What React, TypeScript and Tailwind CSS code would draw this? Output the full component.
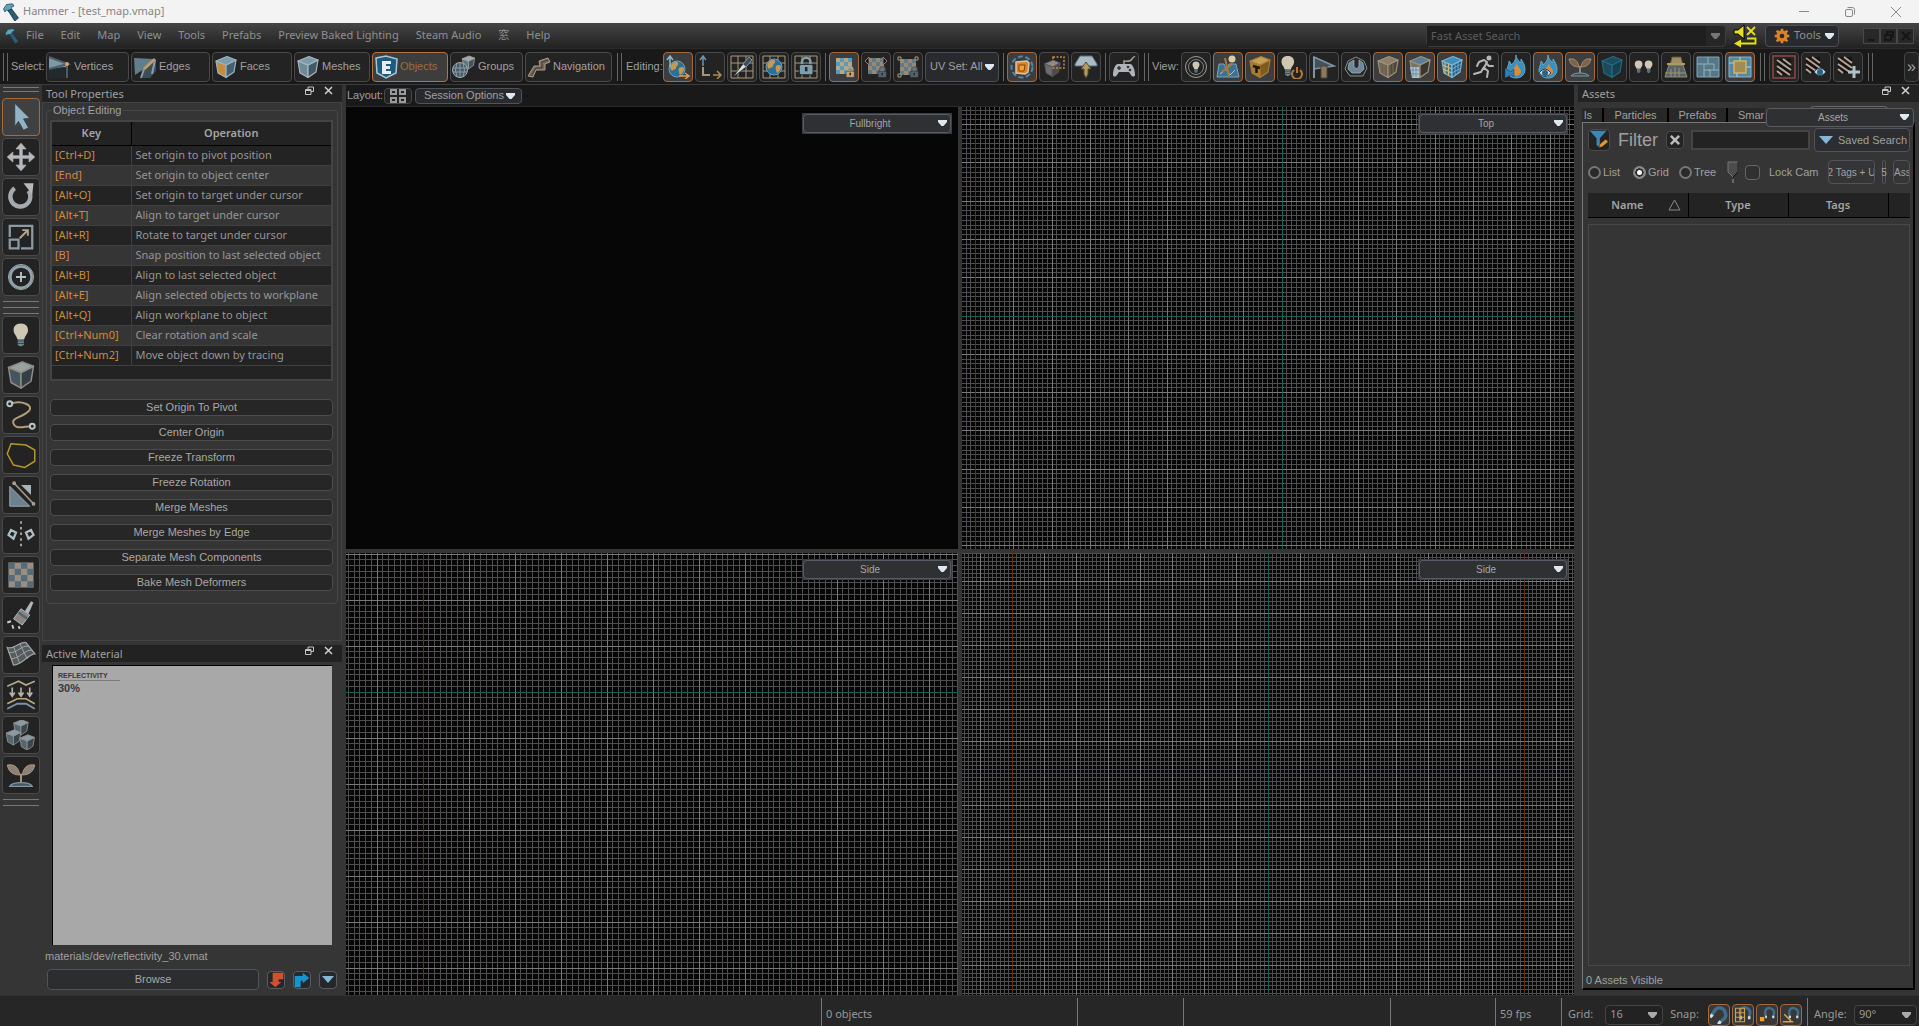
import clsx from 'clsx'
import { type ReactNode } from 'react'

const UI = "font-['Noto_Sans','Noto_Sans_CJK_JP',sans-serif] text-[11px]"
const GOTHIC = "font-['Liberation_Sans','Noto_Sans_CJK_JP',sans-serif]"

function Svg({ size = 24, children, className }: { size?: number, children: ReactNode, className?: string }) {
  return (
    <svg width={size} height={size} viewBox="0 0 24 24" fill="none" className={clsx('shrink-0', className)} aria-hidden="true">
      {children}
    </svg>
  )
}

type CubeProps = { x?: number, y?: number, s?: number, front?: string, side?: string, top?: string, edge?: string }

function Cube({ x = 0, y = 0, s = 1, front = '#5d7482', side = '#3f5562', top = '#8fb0c0', edge = '#b9a58a' }: CubeProps) {
  return (
    <g transform={`translate(${x} ${y}) scale(${s})`} stroke={edge} strokeWidth="1.2" strokeLinejoin="round">
      <path d="M2 6 12 10V22.500L4 18z" fill={front} />
      <path d="M12 10 22 5 20 17 12 22.500z" fill={side} />
      <path d="M2 6 13 1.500 22 5 12 10z" fill={top} />
    </g>
  )
}

function Globe() {
  return (
    <>
      <circle cx="11" cy="14" r="8" fill="#2b7099" stroke="#6aa3c2" />
      <path d="M5 10c3-4 6-4 7-2s-2 3-2 5-3 1-4 3c-2-2-2-4-1-6zM13 13c3-2 5-1 5 1s-2 5-4 6c-1-2-2-5-1-7z" fill="#c99850" />
    </>
  )
}

function Lock({ x = 0, y = 0, s = 1, color = '#7f9fad' }: { x?: number, y?: number, s?: number, color?: string }) {
  return (
    <g transform={`translate(${x} ${y}) scale(${s})`}>
      <path d="M7 11V7a5 5 0 0 1 10 0v4" stroke={color} strokeWidth="3" />
      <rect x="4" y="10" width="16" height="12" rx="2" fill={color} stroke="#222" />
      <path d="M12 13v5" stroke="#1c2a30" strokeWidth="3" />
    </g>
  )
}

function GridLines() {
  return <path d="M1 1h22v22H1zM8 1v22M16 1v22M1 8h22M1 16h22" stroke="#a99a80" />
}

function Checker({ a, b, x = 4, y = 3 }: { a: string, b: string, x?: number, y?: number }) {
  return (
    <g transform={`translate(${x} ${y})`}>
      <rect width="16" height="16" fill={a} />
      <path d="M0 0h4v4H0zM8 0h4v4H8zM4 4h4v4H4zM12 4h4v4h-4zM0 8h4v4H0zM8 8h4v4H8zM4 12h4v4H4zM12 12h4v4h-4z" fill={b} />
    </g>
  )
}

function Flame() {
  return (
    <>
      <path d="M12 0c0 4 3 5 4 8 1-1 1-2 1-4 2 3 4 6 4 10 0 6-4 9-9 9s-9-3-9-8c0-3 2-5 2-9 1 1 2 2 2 4 3-2 5-5 5-10z" fill="#3a8fbb" stroke="#74b4d4" strokeWidth=".8" />
      <path d="M13 8c0 4 4 5 4 9-1 5-9 5-9 0 0-3 4-5 5-9z" fill="#dd8a38" />
    </>
  )
}

function Eye({ x = 0, y = 0 }: { x?: number, y?: number }) {
  return (
    <g transform={`translate(${x} ${y})`}>
      <path d="M1 7q6-8 12 0-6 7-12 0z" fill="#cfd8dd" stroke="#24445a" />
      <circle cx="7" cy="7" r="3" fill="#2b6184" />
    </g>
  )
}

function Plant({ leaf, base }: { leaf: string, base: string }) {
  return (
    <>
      <path d="M1 4c6-1 9 2 10 8C5 12 2 9 1 4zM23 4c-6-1-9 2-10 8 6 0 9-3 10-8z" fill={leaf} stroke="#b59d80" strokeWidth=".7" />
      <path d="M12 11v7" stroke="#b39c80" strokeWidth="1.500" />
      <path d="M3 21c2-4 16-4 18 0z" fill={base} stroke="#7e97a4" />
    </>
  )
}

function Bulb({ x = 0, y = 0, s = 1 }: { x?: number, y?: number, s?: number }) {
  return (
    <g transform={`translate(${x} ${y}) scale(${s})`}>
      <path d="M12 1c5 0 7 3 7 6.500 0 4-3 5-3.500 8.500h-7C8 12.500 5 11.500 5 7.500 5 4 7 1 12 1z" fill="#d0c6b4" />
      <path d="M9 16h6v6l-3 1.500L9 22z" fill="#6f8796" />
      <path d="M9 18h6M9 20.500h6" stroke="#39474f" />
    </g>
  )
}

function Stripes({ frame }: { frame?: boolean }) {
  return (
    <>
      <rect x="5" y="4" width="14" height="16" fill="#181414" />
      <path d="M5 5l14 10M5 11l13 9M5 16l5 4M11 4l8 6" stroke="#b5a598" strokeWidth="2" />
      {frame && <path d="M1 1h22v22H1z" stroke="#8d4747" strokeWidth="1.500" />}
    </>
  )
}

function Magnet() {
  return (
    <>
      <path d="M5 20 4 13C2 5 9 1 14 3s8 5 6 11l-1 6" stroke="#3f6e8c" strokeWidth="4.500" />
      <path d="M3 17h4v5H3zM17 17h4v5h-4z" fill="#d6dde0" />
    </>
  )
}

const ICONS: Record<string, ReactNode> = {
  hammer: <>
    <path d="M2 8 6 2l8-1 2 3-4 2 1 4-5 1-2-2-2 3z" fill="#5fa3bf" stroke="#1e4253" />
    <path d="M8 10l5-2 9 12-5 4z" fill="#2c5f77" stroke="#17303c" />
  </>,
  vertices: <>
    <path d="M1 2 20 9v3L1 14z" fill="#7d98a6" />
    <path d="M1 14 17 12v11H1z" fill="#222a2f" />
    <path d="M1 2 20 9 1 14M19 10v13" stroke="#4b5e69" strokeWidth="2" />
    <circle cx="19" cy="9" r="2" fill="#e8a06a" />
  </>,
  edges: <>
    <path d="M1 3 21 4 11 14 2 20z" fill="#627d8c" />
    <path d="M23 5v11l-6 7H9l2-9z" fill="#3b4d58" />
    <path d="M22 4 11 14" stroke="#c59c65" strokeWidth="3" />
    <path d="M11 14 8 23M22 5l-3 14" stroke="#879da9" strokeWidth="2" />
  </>,
  faces: <Cube front="#c58c3c" side="#45606f" top="#7c9cad" edge="#9bb6c3" />,
  meshes: <Cube front="#6f8b9a" side="#415a69" top="#7c9cad" edge="#a9b8bd" />,
  objects: <>
    <path d="M2 3 12 1l11 3-1 14-10 5L3 18z" fill="#1f5a80" stroke="#a8c7d6" strokeWidth="1.500" />
    <path d="M8 6h9v3h-5v2h4v3h-4v2h5v3H8z" fill="#e6edf0" />
  </>,
  groups: <>
    <Cube x={9} y={0} s={0.62} />
    <circle cx="8" cy="15" r="7.500" fill="#435a67" stroke="#9aabb3" />
    <path d="M1 13h14M1 17h14M8 7v16M5 8q-3 7 0 14M11 8q3 7 0 14" stroke="#9aabb3" strokeWidth=".8" />
  </>,
  navigation: <>
    <path d="M1 21 7 11h6l-1-5 9-3 2 4-5 2v6H9l-3 7z" fill="#75695b" stroke="#a89a86" />
    <path d="M4 21l5-8h6V7l6-2" stroke="#433b33" />
  </>,
  worldAxis: <>
    <Globe />
    <path d="M4 12V2M1 5l3-4 3 4" stroke="#8cb8d0" strokeWidth="1.500" />
    <path d="M13 21h9M19 18l4 3-4 3" stroke="#e39a4c" strokeWidth="1.500" />
  </>,
  localAxis: <>
    <path d="M5 11V2M2 5l3-4 3 4" stroke="#6e95ac" strokeWidth="1.500" />
    <path d="M5 12v8h7" stroke="#a59578" strokeWidth="2" />
    <path d="M15 20h7M19 16l4 4-4 4" stroke="#b08a55" strokeWidth="1.500" />
  </>,
  gridKnife: <>
    <GridLines />
    <path d="M3 22 13 9l3 3z" fill="#d8dee2" stroke="#222" strokeWidth=".6" />
    <path d="M13 9l6-7 3 3-6 7z" fill="#3b4d5a" stroke="#8499a5" />
  </>,
  gridGlobe: <><GridLines /><g transform="translate(1 -2)"><Globe /></g></>,
  gridLock: <><GridLines /><Lock x={2} y={1} s={0.85} /></>,
  uvLock: <><Checker a="#4d9fc7" b="#c1a47e" /><Lock x={12} y={11} s={0.52} color="#c1a279" /></>,
  uvScale: <>
    <Checker a="#5f7b89" b="#9a8874" />
    <path d="M1 6l4-4v8zM23 6l-4-4v8z" fill="#111" stroke="#8f8370" />
    <Lock x={12} y={11} s={0.52} color="#58636a" />
  </>,
  uvCorners: <>
    <Checker a="#5f7b89" b="#9a8874" x={4} y={4} />
    <path d="M2 2h3v3H2zM19 2h3v3h-3zM2 19h3v3H2z" fill="#222" stroke="#b39b78" />
    <Lock x={12} y={11} s={0.52} color="#58636a" />
  </>,
  selectCube: <>
    <circle cx="12" cy="12" r="10.500" stroke="#4f88ab" strokeWidth="2" strokeDasharray="5 2.500" />
    <path d="M6 7l11-1 2 2-1 9-3 2-9-1z" fill="#dd8420" stroke="#d5c5b0" strokeWidth="1.500" />
    <path d="M9 10h6l-1 6H9z" fill="#f4a041" stroke="#7a4310" />
  </>,
  boxCube: <>
    <Cube x={1} y={4} s={0.78} front="#6d6a70" side="#4d4a50" top="#8d8990" edge="#55525a" />
    <path d="M11 2h11v11H11z" stroke="#c78a3c" strokeDasharray="2 1.500" strokeWidth="1.500" />
  </>,
  lamp: <>
    <path d="M6 1h12l5 8v2H1V9z" fill="#a9bcc6" stroke="#596b75" />
    <path d="M12 7l5 7h-3v5l-2 4-2-4v-5H7z" fill="#b39a63" stroke="#5d4b2b" />
  </>,
  gamepad: <>
    <path d="M6 9h12c3 0 5 6 5 11 0 2-3 2-4 0l-2-3H7l-2 3c-1 2-4 2-4 0C1 15 3 9 6 9z" fill="#b0b5b9" />
    <path d="M12 9V6q6 1 8-2t3-2" stroke="#a59c8a" strokeWidth="1.500" />
    <path d="M5 13h4M7 11v4" stroke="#333" strokeWidth="1.500" />
    <circle cx="16" cy="12" r="1.300" fill="#333" /><circle cx="18" cy="15" r="1.300" fill="#333" />
  </>,
  bulbRing: <>
    <circle cx="12" cy="12" r="10.500" stroke="#a59d8d" /><circle cx="12" cy="12" r="7.500" stroke="#7d8589" />
    <Bulb x={6} y={6} s={0.5} />
  </>,
  measure: <>
    <path d="M3 9h5l2 5 3-5h7l3 13H1z" fill="#3d7190" stroke="#7fa5ba" />
    <path d="M4 19l6-5 4 6 5-5" stroke="#b9c8cf" />
    <path d="M9 3l4 18M6 17l10-8" stroke="#a97a3c" strokeWidth="2" />
    <circle cx="16" cy="4" r="3.500" fill="#dccda4" />
  </>,
  toolBox: <>
    <Cube front="#a57c32" side="#7c5a20" top="#c69e54" edge="#a87c34" />
    <path d="M5 11l7 2M8.500 12v6" stroke="#1c150a" strokeWidth="2.500" />
  </>,
  bulbPower: <>
    <Bulb x={-3} y={0} s={0.9} />
    <path d="M14 15a5 5 0 1 0 6 0M17 12v6" stroke="#b07c36" strokeWidth="2" />
  </>,
  funnelRay: <>
    <path d="M2 2 22 11 2 14z" fill="#42515b" stroke="#7e95a3" strokeWidth="1.500" />
    <path d="M2 2v21" stroke="#7e95a3" strokeWidth="2" />
    <path d="M9 11h6v12H9z" fill="#8c7a5e" stroke="#4d4232" />
  </>,
  helm: <>
    <path d="M4 6l8-4 8 4 3 7-4 8H6l-5-7z" fill="#24292c" stroke="#8c8a80" />
    <path d="M5 8l5-3v7l3 2 2-3V5l4 3 1 6-4 4H8l-4-4z" fill="#6d8796" stroke="#a7bac4" strokeWidth=".7" />
  </>,
  crate: <>
    <Cube front="#6b5f50" side="#4e453b" top="#8d7f6c" edge="#a0917a" />
    <path d="M5 8v10M8 9v11M14 10v10M17 9v9" stroke="#8e7d66" strokeWidth=".7" />
  </>,
  crateSplit: <>
    <Cube front="#7a7469" side="#393732" top="#59809a" edge="#a0917a" />
    <path d="M2 12h9v11H4z" fill="#a9c3cf" />
    <path d="M2 15h9M3 19h8M5 12v10M8 12v10" stroke="#5f7f90" strokeWidth=".7" />
  </>,
  wireCube: <>
    <Cube front="#2a76a2" side="#1e5f8c" top="#3f8fbb" edge="#84b5cf" />
    <path d="M5 7v12M8.500 8.500v12M2.500 10l9.500 4M3 14l9 4" stroke="#d5b77c" strokeWidth="1.200" />
    <path d="M15 9v12M18 7v12M12 14l9-5M12 18l9-5" stroke="#7db3d1" strokeWidth=".8" />
  </>,
  runner: <>
    <circle cx="17" cy="3" r="2.500" fill="#b6b6b6" />
    <path d="M7 7l5-2 3 2-3 6 4 3-1 6M12 12l-3 5-7 2M14 8l3 3h4M7 7l-2 4" stroke="#b6b6b6" strokeWidth="2" strokeLinecap="round" strokeLinejoin="round" />
  </>,
  flame: <><Flame /><path d="M1 13l6 4 3-3v8l-3-2-6 3z" fill="#2f80b8" stroke="#1d3848" strokeWidth=".5" /></>,
  flameEye: <><Flame /><Eye x={2} y={11} /></>,
  plant: <Plant leaf="#7d634b" base="#3c4d57" />,
  tealCube: <Cube front="#1b4c5d" side="#16404f" top="#1a4d5e" edge="#28687c" />,
  bulbs: <><Bulb x={0} y={5} s={0.55} /><Bulb x={10} y={5} s={0.55} /></>,
  skirt: <>
    <path d="M8 2h9l2 8H6z" fill="#a08d66" stroke="#5e4f33" />
    <path d="M5 10h14l4 12H1z" fill="#5a6363" stroke="#8e8c74" />
    <path d="M7 14v8M11 12v10M15 13v9M1 18h21" stroke="#9c9579" />
    <path d="M3 9h18" stroke="#b29a65" strokeWidth="2" />
  </>,
  tiles: <>
    <path d="M1 2h22v20H1z" fill="#52788a" stroke="#8aa4b0" />
    <path d="M12 2v7M1 9h17M8 9v13M12 15h11M18 9v6M8 15h6v7" stroke="#97adb7" />
  </>,
  tilesBox: <>
    <path d="M1 2h22v20H1z" fill="#5588a1" stroke="#8fb5c6" />
    <path d="M12 2v4M1 8h5M18 12h5M9 18v4" stroke="#bcd0d9" />
    <path d="M6 6h12v12H6z" fill="#a18c54" stroke="#d2b163" strokeWidth="1.500" />
  </>,
  stripes: <Stripes frame />,
  stripesEye: <><g transform="translate(-3 -2)"><Stripes /></g><Eye x={9} y={10} /></>,
  stripesPlus: <><g transform="translate(-3 -2)"><Stripes /></g><path d="M18 11v12M12 17h12" stroke="#aebfc7" strokeWidth="3" /></>,
  arrow: <path d="M7 1 19 13l-5 .500 4 7-4 2-4-7-3 4z" fill="#92b3c5" stroke="#2c3c46" strokeWidth=".6" />,
  move: <path d="M12 1l4 4.500h-3V11h5.500V8L23 12l-4.500 4v-3H13v5.500h3L12 23l-4-4.500h3V13H5.500v3L1 12l4.500-4v3H11V5.500H8z" fill="#b4babd" stroke="#b4babd" strokeWidth=".6" />,
  rotate: <>
    <path d="M7 5a8 8 0 1 0 11 2" stroke="#a3abb0" strokeWidth="3.500" />
    <path d="M14 1h8l-1 9z" fill="#b5babd" />
  </>,
  scale: <>
    <path d="M3 12V3h18v18H12" stroke="#8a9ba3" strokeWidth="1.800" />
    <path d="M3 14h7v7H3z" stroke="#8a9ba3" strokeWidth="1.800" />
    <path d="M11 13l6-6M13 6.500h4.500V11" stroke="#b5a78f" strokeWidth="1.500" />
  </>,
  pivot: <>
    <circle cx="12" cy="12" r="8.500" stroke="#8fa4ae" strokeWidth="2" />
    <circle cx="12" cy="12" r="10" stroke="#a9b3b8" strokeWidth=".8" />
    <path d="M12 8v8M8 12h8" stroke="#b5bfc4" strokeWidth="1.500" />
  </>,
  bulb: <Bulb x={2} y={2} s={0.82} />,
  block: <Cube front="#44555f" side="#333f46" top="#98a19f" edge="#8f8c83" />,
  path: <>
    <path d="M4 3c8-3 19 1 14 6S4 14 6 19s9 2 14 2" stroke="#b39d78" strokeWidth="1.600" />
    <circle cx="3" cy="3" r="2" stroke="#b6c3ca" strokeWidth="1.500" /><circle cx="21" cy="21" r="2" stroke="#b6c3ca" strokeWidth="1.500" />
  </>,
  polygon: <path d="M4 3l12 1 7 4v9l-8 5-9-2-5-9z" stroke="#b8942f" strokeWidth="1.200" />,
  clip: <>
    <path d="M3 5v16h16z" fill="#6c818c" stroke="#a4b3ba" strokeWidth=".7" /><path d="M12 4h8v8z" fill="#a5b4bb" />
    <path d="M6 2l16 17" stroke="#a59a89" strokeWidth="1.300" />
    <circle cx="6.500" cy="2.500" r="1" stroke="#b5ab9c" /><circle cx="22" cy="19" r="1" stroke="#b5ab9c" />
  </>,
  mirror: <>
    <path d="M12 1v22" stroke="#a8a8a8" strokeWidth="1.500" strokeDasharray="2 2.500" />
    <path d="M4 8l4 2-2 5-4-3zM20 8l-4 2 2 5 4-3z" stroke="#aebdc6" strokeWidth="1.800" />
  </>,
  checker: (
    <>
      <path d="M2 2h20v20H2z" fill="#9a8d82" />
      <path d="M2 2h5v5H2zM12 2h5v5h-5zM7 7h5v5H7zM17 7h5v5h-5zM2 12h5v5H2zM12 12h5v5h-5zM7 17h5v5H7zM17 17h5v5h-5z" fill="#566b79" />
    </>
  ),
  brush: <>
    <path d="M15 9l5-8 2 1-4 9z" fill="#aab7bd" />
    <path d="M12 7l7 5-6 8-7-5z" fill="#8c8580" stroke="#b7c1c6" strokeWidth=".7" />
    <path d="M10 10l7 5" stroke="#4f6675" strokeWidth="2" />
    <path d="M1 18l3-1M5 20l1 3M10 21l1 2" stroke="#c7cdd0" strokeWidth="1.500" />
  </>,
  mesh: <>
    <path d="M1 6c6 2 9-5 15-4l7 9c-5 0-10 9-17 9z" fill="#525c61" stroke="#a2a39e" />
    <path d="M2 10c7 1 10-6 16-5M4 15c7 0 10-7 17-7M6 5l5 14M11 3l6 12" stroke="#a2a39e" strokeWidth=".8" />
  </>,
  displace: <>
    <path d="M1 5l9-4 6 3 7-3" stroke="#b6a88f" strokeWidth="1.300" />
    <path d="M5 6v6M12 6v6M19 6v6M3 10l2 3 2-3M10 10l2 3 2-3M17 10l2 3 2-3" stroke="#b8b1a5" strokeWidth="1.300" />
    <path d="M1 19l8-4h7l7 4" stroke="#c2a97c" strokeWidth="1.300" /><path d="M1 23l8-4h7l7 4" stroke="#7c94a2" strokeWidth="1.500" />
  </>,
  blocks: <>
    <Cube x={5} y={-1} s={0.58} front="#536773" side="#37464f" top="#8a9ba3" edge="#93918a" />
    <Cube x={-1} y={7} s={0.58} front="#536773" side="#37464f" top="#8a9ba3" edge="#93918a" />
    <Cube x={10} y={11} s={0.58} front="#536773" side="#37464f" top="#8a9ba3" edge="#93918a" />
  </>,
  plantGrey: <Plant leaf="#8d8176" base="#47555e" />,
  gear: <>
    <path d="M12 1v22M1 12h22M4 4l16 16M20 4 4 20" stroke="#d9822b" strokeWidth="4" />
    <circle cx="12" cy="12" r="6" fill="#292a2d" stroke="#d9822b" strokeWidth="5" />
  </>,
  mute: <>
    <path d="M1 6h4l6-5v14l-6-5H1z" fill="#e6df1a" stroke="#000" />
    <path d="M14 3l8 8M22 3l-8 8" stroke="#e6df1a" strokeWidth="1.800" />
    <path d="M14 14.500h8.500v5H6" stroke="#e6df1a" strokeWidth="1.800" />
    <path d="M1 19.500l7-4v8z" fill="#e6df1a" />
  </>,
  filter: <>
    <path d="M1 1h20l-8 9v11l-4-3v-8z" fill="#3a88b3" />
    <path d="M12 21l1-4 7-6 3 3-7 6z" fill="#e79a33" stroke="#3a2a12" strokeWidth=".6" />
  </>,
  redDown: <path d="M23 1v10h-7v4h4l-9 8-9-8h5V1z" fill="#d0502f" />,
  blueRight: <path d="M1 23V6h12V1l10 8-10 8v-4h-3v10z" fill="#1893ce" />,
  magnet: <g transform="rotate(40 12 12)"><Magnet /></g>,
  magnetGrid: <><g transform="translate(5 0) scale(.8)"><Magnet /></g><path d="M2 3h12v18H2zM8 3v18M2 9h12M2 15h12" stroke="#cfa052" strokeWidth="1.500" /></>,
  magnetVertex: <><g transform="translate(7 1) scale(.7)"><Magnet /></g><path d="M2 14h7v7H2z" fill="#f0a02c" stroke="#3a2a12" /></>,
  magnetAngle: <><g transform="translate(7 1) scale(.7)"><Magnet /></g><path d="M3 11l9 9M1 21h14" stroke="#e0a04a" strokeWidth="2" /></>,
}

function Icon({ name, size }: { name: string, size?: number }) {
  return <Svg size={size}>{ICONS[name]}</Svg>
}

function Caret({ className = 'text-[#dce9f2]' }: { className?: string }) {
  return (
    <svg width="9" height="6" viewBox="0 0 9 6" className={clsx('shrink-0', className)} aria-hidden="true">
      <path d="M0 0h9v2L5.500 6h-2L0 2z" fill="currentColor" />
    </svg>
  )
}

function Grip() {
  return <div className="h-7 w-[5px] shrink-0 border-x border-[#666]" />
}

function Separator() {
  return <div className="mr-px ml-[2px] h-7 w-px shrink-0 bg-[#666]" />
}

function IconButton({ name, label, active }: { name: string, label: string, active?: boolean }) {
  return (
    <button
      aria-label={label}
      className={clsx(
        'flex h-[30px] w-[30px] shrink-0 items-center justify-center rounded border',
        active ? 'border-[#a8693a] bg-[#3d3d3e]' : 'border-[#494949] bg-[#232323]'
      )}
    >
      <Icon name={name} />
    </button>
  )
}

function ComboBox({ label, options, className }: { label: string, options: string[], className: string }) {
  return (
    <div className={clsx('absolute', className)}>
      <select aria-label={label} className="block h-full w-full appearance-none rounded border border-[#565b66] bg-[#2f3032] pr-[14px] text-center [text-align-last:center] text-[10px] text-[#a5a5a5]">
        {options.map(o => <option key={o}>{o}</option>)}
      </select>
      <Caret className="pointer-events-none absolute top-1/2 right-[5px] -mt-1 text-[#dce9f2]" />
    </div>
  )
}

function TitleBar() {
  return (
    <header className={clsx('flex h-[23px] shrink-0 items-center bg-[#f3f3f3] pl-[2px] text-[#858585]', UI)}>
      <Icon name="hammer" size={18} />
      <h1 className="ml-[3px] grow">Hammer - [test_map.vmap]</h1>
      <div className="flex items-center">
        <button aria-label="Minimize" className="flex w-[46px] justify-center"><span className="h-px w-[10px] bg-[#888]" /></button>
        <button aria-label="Restore" className="flex w-[46px] justify-center">
          <svg width="10" height="10" viewBox="0 0 10 10" fill="none" stroke="#888"><rect x=".5" y="2.500" width="7" height="7" rx="1.500" /><path d="M2.500 .5h5q2 0 2 2v5" /></svg>
        </button>
        <button aria-label="Close" className="flex w-[46px] justify-center">
          <svg width="10" height="10" viewBox="0 0 10 10" stroke="#888"><path d="M0 0l10 10M10 0 0 10" /></svg>
        </button>
      </div>
    </header>
  )
}

const MENUS = ['File', 'Edit', 'Map', 'View', 'Tools', 'Prefabs', 'Preview Baked Lighting', 'Steam Audio', '窓', 'Help']

function MenuBar() {
  return (
    <div className={clsx('flex h-[25px] shrink-0 items-center bg-linear-to-b from-[#454545] to-[#222] pl-1 text-[#8f8f8f]', UI)}>
      <Icon name="hammer" size={16} />
      <nav className="ml-[6px] flex grow gap-[17px]">
        {MENUS.map(m => <button key={m}>{m}</button>)}
      </nav>
      <div className="flex h-[22px] w-[300px] items-center rounded border border-[#3c3c3c] bg-[#262626]">
        <input aria-label="Fast Asset Search" placeholder="Fast Asset Search" className="h-full min-w-0 grow bg-[#1f1f1f] pl-1 placeholder:text-[#5c5c5c]" />
        <Caret className="mx-[5px] text-[#777]" />
      </div>
      <button aria-label="Mute" className="ml-[7px]"><Icon name="mute" size={24} /></button>
      <button className="ml-2 flex h-[22px] w-[74px] items-center gap-1 rounded border border-[#4c4f57] bg-[#292a2d] pl-2">
        <Icon name="gear" size={16} />
        <span>Tools</span>
        <Caret />
      </button>
      <div className="mr-[5px] ml-6 flex">
        {['Minimize view', 'Restore view', 'Close view'].map((l, i) => (
          <button key={l} aria-label={l} className="flex h-4 w-[17px] items-center justify-center border border-[#484848] bg-[#282828]">
            <svg width="12" height="12" viewBox="0 0 12 12" fill="none" stroke="#161616" strokeWidth="2">
              <path d={['M2 10h7', 'M4 4V2h6v5H8M2 5h6v5H2z', 'M2 2l8 8M10 2l-8 8'][i]} />
            </svg>
          </button>
        ))}
      </div>
    </div>
  )
}

const SELECT_MODES = [
  { label: 'Vertices', icon: 'vertices', width: 'w-[83px]' },
  { label: 'Edges', icon: 'edges', width: 'w-[79px]' },
  { label: 'Faces', icon: 'faces', width: 'w-[80px]' },
  { label: 'Meshes', icon: 'meshes', width: 'w-[76px]' },
  { label: 'Objects', icon: 'objects', width: 'w-[76px]' },
  { label: 'Groups', icon: 'groups', width: 'w-[73px]' },
  { label: 'Navigation', icon: 'navigation', width: 'w-[87px]' },
]

const VIEW_TOOLS = [
  ['bulbRing', 'Lighting preview', 0], ['measure', 'Show helpers', 1], ['toolBox', 'Show tool materials', 1], ['bulbPower', 'Toggle lights', 0],
  ['funnelRay', 'Show rays', 0], ['helm', 'Show physics', 0], ['crate', 'Show props', 1], ['crateSplit', 'Show mesh overlay', 1],
  ['wireCube', 'Show wireframe', 1], ['runner', 'Animate', 0], ['flame', 'Play particles', 0], ['flameEye', 'Show particles', 1],
  ['plant', 'Show foliage', 1], ['tealCube', 'Show volumes', 0], ['bulbs', 'Show light probes', 0], ['skirt', 'Show shadows', 0],
  ['tiles', 'Show tiles', 0], ['tilesBox', 'Show tile bounds', 1],
] as const

function Toolbar() {
  return (
    <div className="flex h-[37px] shrink-0 items-center gap-[2px] overflow-hidden border-t border-b border-t-[#2a2a2a] border-b-[#3c3c3c] bg-[#191919] pl-[3px] text-[11px] text-[#a0a0a0]">
      <Grip />
      <span className="w-[34px] shrink-0 pl-px">Select:</span>
      {SELECT_MODES.map(m => {
        const active = m.label === 'Objects'
        return (
          <button
            key={m.label}
            className={clsx(
              'flex h-[30px] shrink-0 items-center gap-[2px] rounded border pl-[1px]', m.width,
              active ? 'border-[#b8713a] bg-[#3d3d3e] text-[#a5693a]' : 'border-[#494949] bg-[#232323]'
            )}
          >
            <Icon name={m.icon} />
            {m.label}
          </button>
        )
      })}
      <div className="ml-[3px] flex"><Grip /></div>
      <span className="w-[37px] shrink-0 pl-[2px]">Editing:</span>
      <IconButton name="worldAxis" label="World space" active />
      <IconButton name="localAxis" label="Local space" />
      <IconButton name="gridKnife" label="Snap workplane" />
      <IconButton name="gridGlobe" label="World workplane" />
      <IconButton name="gridLock" label="Lock workplane" />
      <Separator />
      <IconButton name="uvLock" label="Texture lock" active />
      <IconButton name="uvScale" label="Scale lock" />
      <IconButton name="uvCorners" label="Corner lock" />
      <button className="flex h-[30px] w-[74px] shrink-0 items-center justify-between rounded border border-[#4c4f57] bg-[#292a2d] px-1 whitespace-nowrap">
        UV Set: All
        <Caret />
      </button>
      <Separator />
      <IconButton name="selectCube" label="Select through" active />
      <IconButton name="boxCube" label="Box select" />
      <IconButton name="lamp" label="Drop to floor" />
      <Separator />
      <IconButton name="gamepad" label="Run game" />
      <div className="ml-[3px] flex"><Grip /></div>
      <span className="w-[28px] shrink-0 pl-px">View:</span>
      {VIEW_TOOLS.map(([icon, label, on]) => <IconButton key={icon} name={icon} label={label} active={!!on} />)}
      <div className="mr-[2px] ml-[3px] flex"><Grip /></div>
      <IconButton name="stripes" label="Hide" />
      <IconButton name="stripesEye" label="Show hidden" />
      <IconButton name="stripesPlus" label="Quick hide" />
      <div className="ml-[3px] flex"><Grip /></div>
      <button aria-label="More tools" className="ml-auto h-[30px] w-[15px] shrink-0 rounded border border-[#444] bg-[#232323] text-base leading-none">»</button>
    </div>
  )
}

function ToolStripButton({ name, active }: { name: string, active?: boolean }) {
  return (
    <button
      aria-label={name}
      className={clsx(
        'flex h-[38px] w-[38px] items-center justify-center rounded border',
        active ? 'border-[#a8693a] bg-[#404040]' : 'border-[#4a4a4a] bg-[#232323]'
      )}
    >
      <Icon name={name} size={30} />
    </button>
  )
}

function ToolStrip() {
  return (
    <aside className="flex w-[42px] shrink-0 flex-col items-center gap-[2px] bg-[#353535] pt-[2px] pr-px">
      <div className="mb-1 h-[5px] w-9 border-y border-[#777]" />
      <ToolStripButton name="arrow" active />
      {['move', 'rotate', 'scale', 'pivot'].map(n => <ToolStripButton key={n} name={n} />)}
      <div className="mt-[3px] flex h-[13px] w-9 flex-col justify-between">
        <div className="h-px bg-[#777]" /><div className="h-px bg-[#777]" /><div className="h-px bg-[#777]" />
      </div>
      {['bulb', 'block', 'path', 'polygon', 'clip', 'mirror', 'checker', 'brush', 'mesh', 'displace', 'blocks', 'plantGrey'].map(n => (
        <ToolStripButton key={n} name={n} />
      ))}
      <div className="mt-[3px] h-[7px] w-9 border-y border-[#777]" />
    </aside>
  )
}

function PanelHeader({ title }: { title: string }) {
  return (
    <div className={clsx('flex h-[17px] shrink-0 items-center bg-[#222] pr-[9px] pl-1 text-[#a0a0a0]', UI)}>
      <h2 className="grow pt-px">{title}</h2>
      <button aria-label={`Float ${title}`} className="mb-[6px] mr-[10px]">
        <svg width="9" height="9" viewBox="0 0 9 9" fill="none" stroke="#c4c4c4"><path d="M3 3V1h5.500v4.500H6M.5 3.500H6v5H.5zM.5 4.500H6" /></svg>
      </button>
      <button aria-label={`Close ${title}`} className="mb-[6px]">
        <svg width="9" height="9" viewBox="0 0 9 9" stroke="#d0d0d0" strokeWidth="1.500"><path d="M1 1l7 7M8 1 1 8" /></svg>
      </button>
    </div>
  )
}

const SHORTCUTS = [
  ['[Ctrl+D]', 'Set origin to pivot position'],
  ['[End]', 'Set origin to object center'],
  ['[Alt+O]', 'Set origin to target under cursor'],
  ['[Alt+T]', 'Align to target under cursor'],
  ['[Alt+R]', 'Rotate to target under cursor'],
  ['[B]', 'Snap position to last selected object'],
  ['[Alt+B]', 'Align to last selected object'],
  ['[Alt+E]', 'Align selected objects to workplane'],
  ['[Alt+Q]', 'Align workplane to object'],
  ['[Ctrl+Num0]', 'Clear rotation and scale'],
  ['[Ctrl+Num2]', 'Move object down by tracing'],
]

const ACTIONS = [
  'Set Origin To Pivot', 'Center Origin', 'Freeze Transform', 'Freeze Rotation',
  'Merge Meshes', 'Merge Meshes by Edge', 'Separate Mesh Components', 'Bake Mesh Deformers',
]

function ToolProperties() {
  return (
    <section className="flex min-h-0 grow flex-col">
      <PanelHeader title="Tool Properties" />
      <div className="grow border border-[#444] px-[3px]">
        <fieldset className="rounded border border-[#484848] pr-1 pb-3 pl-[3px]">
          <legend className="ml-px px-[2px] text-[11px] leading-[14px] text-[#a0a0a0]">Object Editing</legend>
          <div className="mt-[3px] border-2 border-[#444] bg-[#232323] pb-[13px]">
            <table className={clsx('w-full table-fixed border-collapse whitespace-nowrap', UI)}>
              <thead>
                <tr className="h-[23px] border-b border-black text-[#a5a5a5]">
                  <th className="w-[79px] border-r border-black p-0 font-semibold">Key</th>
                  <th className="p-0 font-semibold">Operation</th>
                </tr>
              </thead>
              <tbody>
                {SHORTCUTS.map(([key, operation]) => (
                  <tr key={key} className="h-5 border-b border-[#404040] even:bg-[#353535]">
                    <td className="border-r border-[#404040] p-0 pl-[3px] text-[#cf8a42]">{key}</td>
                    <td className="p-0 pl-[4px] text-[#959595]">{operation}</td>
                  </tr>
                ))}
              </tbody>
            </table>
          </div>
          <div className="mt-[18px] flex flex-col gap-2">
            {ACTIONS.map(a => (
              <button key={a} className="h-[17px] rounded-sm border border-[#4c4c4c] bg-[#262626] text-[11px] leading-[15px] text-[#a8a8a8]">{a}</button>
            ))}
          </div>
        </fieldset>
      </div>
    </section>
  )
}

function ActiveMaterial() {
  return (
    <section className="mt-1 shrink-0">
      <PanelHeader title="Active Material" />
      <div className="mx-[10px] mt-[3px] aspect-square border-t border-l border-black bg-[#a9a8a8] pt-[6px] pl-[5px] font-bold text-[#383838]">
        <div className="w-[62px] border-b border-[#7c7c7c] text-[7px] leading-[8px]">REFLECTIVITY</div>
        <div className="text-[11px] leading-[14px]">30%</div>
      </div>
      <div className="mt-[4px] pl-[3px] text-[11px] leading-[14px] text-[#a0a0a0]">materials/dev/reflectivity_30.vmat</div>
      <div className="mt-[6px] mb-[5px] flex items-center gap-2 pr-[5px] pl-[5px]">
        <button className="h-[21px] grow rounded border border-[#4f535c] bg-[#2c2d2f] text-[11px] text-[#a8a8a8]">Browse</button>
        <button aria-label="Apply material" className="flex h-[18px] w-[18px] items-center justify-center rounded border border-[#565b66] bg-[#26272a]"><Icon name="redDown" size={16} /></button>
        <button aria-label="Pick material" className="flex h-[18px] w-[18px] items-center justify-center rounded border border-[#565b66] bg-[#26272a]"><Icon name="blueRight" size={16} /></button>
        <button aria-label="Recent materials" className="flex h-[18px] w-[18px] items-center justify-center rounded border border-[#565b66] bg-[#26272a]">
          <svg width="12" height="7" viewBox="0 0 12 7"><path d="M0 0h12L6 7z" fill="#86b6d6" /></svg>
        </button>
      </div>
    </section>
  )
}

type GridProps = { originX: number, originY: number, major: number, divisions: number }

const EXTENT = 2400

// lines are rounded to whole pixels so they stay one pixel thick at any zoom
function lines(origin: number, step: number, axis: 'x' | 'y', skip = 0) {
  const first = -Math.floor(origin / step)
  const count = Math.ceil(EXTENT / step)
  let d = ''
  for (let i = first; i < first + count; i++) {
    if (skip && i % skip === 0) continue
    const p = Math.floor(origin + i * step) + 0.5
    d += axis === 'x' ? `M${p} 0V${EXTENT}` : `M0 ${p}H${EXTENT}`
  }
  return d
}

function Grid({ originX, originY, major, divisions }: GridProps) {
  const minor = major / divisions
  const x = Math.floor(originX) + 0.5
  const y = Math.floor(originY) + 0.5
  const left = Math.floor(originX - major * 8) + 0.5
  const right = Math.floor(originX + major * 8) + 0.5
  return (
    <svg className="absolute inset-0 h-full w-full" fill="none" aria-hidden="true">
      <path d={lines(originX, minor, 'x', divisions) + lines(originY, minor, 'y', divisions)} stroke="#4e4e4e" />
      <path d={lines(originX, major, 'x') + lines(originY, major, 'y')} stroke="#787878" />
      <path d={`M${left} 0V${EXTENT}M${right} 0V${EXTENT}`} stroke="#5c3518" />
      <path d={`M${x} 0V${EXTENT}M0 ${y}H${EXTENT}`} stroke="#17605f" />
    </svg>
  )
}

function Viewport({ mode, grid }: { mode: string, grid?: GridProps }) {
  return (
    <div className="relative overflow-hidden bg-[#060606]">
      {grid && <Grid {...grid} />}
      <ComboBox
        label={`${mode} view mode`}
        options={[mode, 'Wireframe', 'Front']}
        className="top-[6px] right-[6px] h-[21px] w-[150px] bg-[#3a3d44] p-px"
      />
    </div>
  )
}

function Viewports() {
  return (
    <main className="flex min-w-0 grow flex-col bg-[#353535]">
      <div className="flex h-[22px] shrink-0 items-center gap-[3px] border-b border-[#2a2a2a] bg-[#191919] pl-px text-[11px] text-[#a0a0a0]">
        <span className="w-[34px]">Layout:</span>
        <button aria-label="Four pane layout" className="flex h-4 w-7 items-center justify-center rounded border border-[#494949] bg-[#232323]">
          <svg width="16" height="14" viewBox="0 0 16 14" fill="none" stroke="#9a9a9a" strokeWidth="2"><path d="M1 1h5v4H1zM10 1h5v4h-5zM1 9h5v4H1zM10 9h5v4h-5z" /></svg>
        </button>
        <button className="flex h-4 w-[107px] items-center justify-end gap-[2px] rounded border border-[#4f535c] bg-[#292a2d] pr-[6px]">
          Session Options
          <Caret />
        </button>
      </div>
      <div className="grid min-h-0 grow grid-cols-2 grid-rows-2 gap-1">
        <Viewport mode="Fullbright" />
        <Viewport mode="Top" grid={{ originX: 320, originY: 209, major: 38.3, divisions: 8 }} />
        <Viewport mode="Side" grid={{ originX: 445, originY: 139, major: 46, divisions: 8 }} />
        <Viewport mode="Side" grid={{ originX: 306, originY: 220, major: 32, divisions: 8 }} />
      </div>
    </main>
  )
}

function Radio({ label, checked, className }: { label: string, checked?: boolean, className: string }) {
  return (
    <label className={clsx('flex shrink-0 items-center gap-[2px]', className)}>
      <input
        type="radio"
        name="layout"
        defaultChecked={checked}
        className="h-[13px] w-[13px] appearance-none rounded-full border-2 border-[#777] bg-[#2a2a2a] checked:border-[#888] checked:bg-white checked:shadow-[inset_0_0_0_2px_#2a2a2a]"
      />
      {label}
    </label>
  )
}

function Assets() {
  return (
    <aside className="flex w-[341px] shrink-0 flex-col bg-[#353535]">
      <PanelHeader title="Assets" />
      <div className="relative flex grow flex-col pt-[6px] pr-[4px] pb-[5px] pl-1 text-[11px] text-[#a0a0a0]">
        <div role="tablist" className="flex h-[14px] shrink-0 text-[#a0a0a0]">
          <button role="tab" className="w-[22px] border-r-2 border-black bg-[#282828] pl-[2px] text-left leading-[12px]">ls</button>
          <button role="tab" className="w-[65px] border-r-2 border-black bg-[#282828] leading-[12px]">Particles</button>
          <button role="tab" className="w-[59px] border-r-2 border-black bg-[#282828] leading-[12px]">Prefabs</button>
          <button role="tab" className="w-[37px] bg-[#282828] pl-[10px] text-left leading-[12px]">Smar</button>
          <div className="mt-[-2px] ml-[45px] h-3 w-[78px] rounded-t border border-b-0 border-[#666]" />
        </div>
        <ComboBox label="Asset tab" options={['Assets', 'Particles', 'Prefabs']} className="top-[6px] right-[5px] h-[19px] w-[148px]" />
        <div className="flex grow flex-col border-t border-r-2 border-b-2 border-l border-t-[#777] border-r-black border-b-black border-l-[#777] pr-[3px] pl-[5px]">
          <div className="mt-[5px] flex h-6 items-center">
            <button aria-label="Edit filter" className="flex h-[22px] w-[22px] shrink-0 items-center justify-center rounded border border-[#4a4a4a] bg-[#232323]"><Icon name="filter" size={20} /></button>
            <label htmlFor="filter" className="ml-2 w-[48px] shrink-0 text-lg leading-none">Filter</label>
            <button aria-label="Clear filter" className="flex h-[18px] w-[18px] shrink-0 items-center justify-center rounded border border-[#4a4a4a] bg-[#232323]">
              <svg width="10" height="10" viewBox="0 0 12 12" stroke="#bbb" strokeWidth="3"><path d="M1 1l10 10M11 1 1 11" /></svg>
            </button>
            <input id="filter" className="mr-1 ml-[7px] h-5 w-0 min-w-0 grow border-2 border-[#444] bg-[#232323]" />
            <button className="flex h-6 w-[96px] shrink-0 items-center gap-[5px] rounded border border-[#4f535c] bg-[#2c2d30] pl-1 whitespace-nowrap">
              <svg width="14" height="8" viewBox="0 0 14 8"><path d="M0 0h14L7 8z" fill="#86b6d6" /></svg>
              Saved Search
            </button>
          </div>
          <div className="mt-2 flex h-6 items-center overflow-hidden">
            <Radio label="List" className="w-[45px]" />
            <Radio label="Grid" checked className="w-[46px]" />
            <Radio label="Tree" className="w-[48px]" />
            <svg width="12" height="22" viewBox="0 0 12 22" className="shrink-0"><path d="M1 1h10v10l-5 5-5-5z" fill="#4c4c4c" stroke="#777" /><path d="M11 1v10l-5 5" stroke="#111" fill="none" /><path d="M6 18v4" stroke="#999" /></svg>
            <label className="ml-[6px] flex w-[83px] shrink-0 items-center gap-[9px] whitespace-nowrap">
              <input type="checkbox" className="h-[15px] w-[15px] shrink-0 appearance-none rounded-sm border border-[#666] bg-[#303030]" />
              Lock Cam
            </label>
            <button className="flex h-6 w-[47px] shrink-0 items-center justify-center overflow-hidden rounded border border-[#4f535c] text-[10px] whitespace-nowrap">2 Tags + U</button>
            <button className="ml-[7px] flex h-6 w-1 shrink-0 items-center justify-center rounded-sm border border-[#4f535c] text-[10px]">5</button>
            <button className="ml-auto flex h-6 w-[17px] shrink-0 items-center overflow-hidden rounded border border-[#4f535c] text-[10px]">Assets</button>
          </div>
          <table className={clsx('mt-[9px] w-full table-fixed border-collapse bg-[#232323] text-[#a5a5a5]', UI)}>
            <thead>
              <tr className="h-6 border-b border-black">
                <th className="w-[100px] border-r border-black p-0 pt-px font-semibold">
                  <span className="flex items-center justify-end gap-6 pr-[7px]">
                    Name
                    <svg width="13" height="12" viewBox="0 0 13 12" fill="none" stroke="#888"><path d="M6.500 1 1 11h11z" /></svg>
                  </span>
                </th>
                <th className="w-[100px] border-r border-black p-0 pt-px font-semibold">Type</th>
                <th className="w-[100px] border-r border-black p-0 pt-px font-semibold">Tags</th>
                <th className="p-0" />
              </tr>
            </thead>
          </table>
          <div className="mt-[6px] grow border border-[#484848]" />
          <div className="-ml-[2px] pt-[7px] pb-px leading-[14px]">0 Assets Visible</div>
        </div>
      </div>
    </aside>
  )
}

function StatusSelect({ id, label, value, className }: { id: string, label: string, value: string, className: string }) {
  return (
    <>
      <label htmlFor={id}>{label}</label>
      <div className={clsx('relative ml-auto h-5', className)}>
        <select id={id} className="block h-full w-full appearance-none rounded border border-[#444] bg-[#222] pl-1">
          <option>{value}</option>
        </select>
        <Caret className="pointer-events-none absolute top-[7px] right-[6px] text-[#aaa]" />
      </div>
    </>
  )
}

function StatusBar() {
  return (
    <footer className={clsx('flex h-[31px] shrink-0 items-stretch justify-end border-t border-[#303030] bg-[#262626] pt-[2px] text-[#999]', UI)}>
      <div className="flex w-64 items-center border-l border-[#777] pt-[5px] pl-1">0 objects</div>
      <div className="w-[106px] border-l border-[#777]" />
      <div className="w-[207px] border-l border-[#777]" />
      <div className="w-[105px] border-l border-[#777]" />
      <div className="flex w-[66px] items-center border-l border-[#777] pt-[5px] pl-1">59 fps</div>
      <div className="flex w-[246px] items-center border-l border-[#777] pt-[5px] pr-[5px] pl-[6px]">
        <StatusSelect id="grid-size" label="Grid:" value="16" className="w-[58px]" />
        <span className="mr-[9px] ml-[7px]">Snap:</span>
        <div className="flex gap-[2px]">
          {['magnet', 'magnetGrid', 'magnetVertex', 'magnetAngle'].map(n => (
            <button key={n} aria-label={n} className="flex h-[22px] w-[22px] items-center justify-center rounded border border-[#a8693a] bg-[#3a3836]"><Icon name={n} size={18} /></button>
          ))}
        </div>
      </div>
      <div className="flex w-[112px] items-center border-l border-[#777] pt-[5px] pr-[2px] pl-[6px]">
        <StatusSelect id="angle" label="Angle:" value="90°" className="w-[63px]" />
      </div>
    </footer>
  )
}

function App() {
  return (
    <div className={clsx('flex h-screen flex-col overflow-hidden bg-[#353535]', GOTHIC)}>
      <TitleBar />
      <MenuBar />
      <Toolbar />
      <div className="flex min-h-0 grow">
        <ToolStrip />
        <div className="mr-1 flex w-[300px] shrink-0 flex-col bg-[#353535]">
          <ToolProperties />
          <ActiveMaterial />
        </div>
        <Viewports />
        <div className="w-1 shrink-0 bg-[#353535]" />
        <Assets />
      </div>
      <StatusBar />
    </div>
  )
}

export default App
